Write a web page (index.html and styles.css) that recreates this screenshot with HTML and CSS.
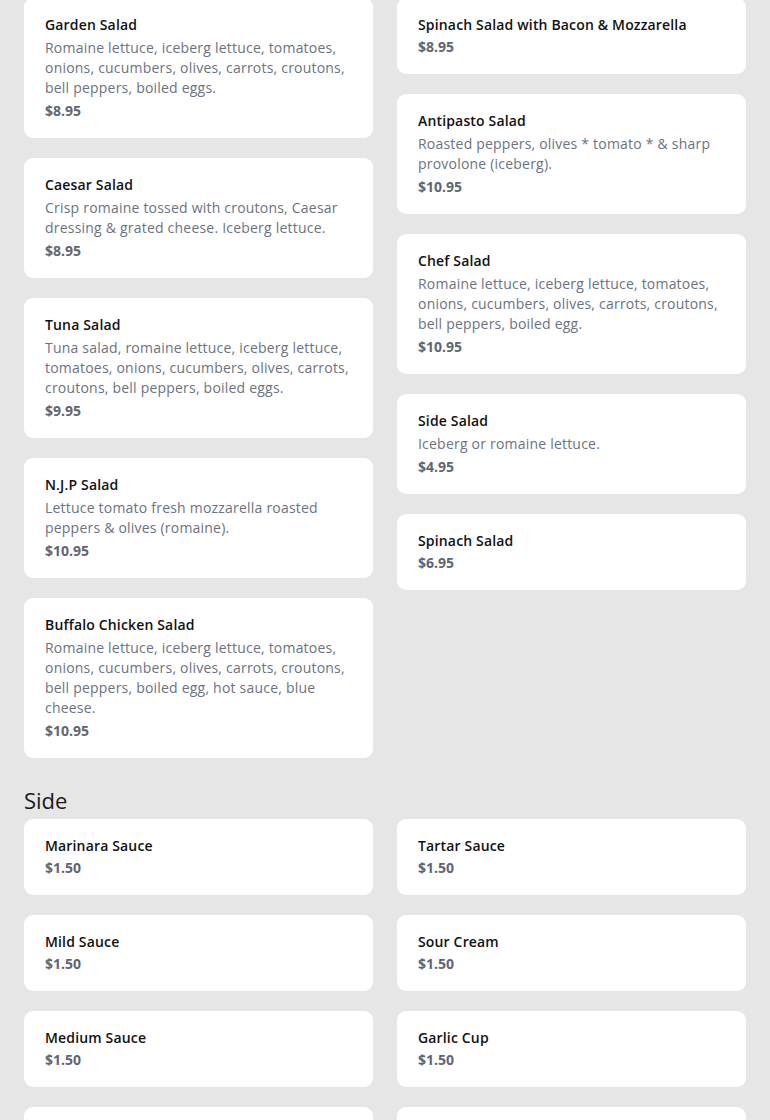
FILE: index.html
```html
<!DOCTYPE html>
<html lang="en">
<head>
<meta charset="utf-8">
<title>Menu</title>
<link rel="stylesheet" href="styles.css">
</head>
<body>
<main class="menu">
  <section class="section section-first">
    <div class="cols">
      <div class="col">
        <div class="card"><div class="name">Garden Salad</div><div class="desc">Romaine lettuce, iceberg lettuce, tomatoes, onions, cucumbers, olives, carrots, croutons, bell peppers, boiled eggs.</div><div class="price">$8.95</div></div>
        <div class="card"><div class="name">Caesar Salad</div><div class="desc">Crisp romaine tossed with croutons, Caesar dressing &amp; grated cheese. Iceberg lettuce.</div><div class="price">$8.95</div></div>
        <div class="card"><div class="name">Tuna Salad</div><div class="desc">Tuna salad, romaine lettuce, iceberg lettuce, tomatoes, onions, cucumbers, olives, carrots, croutons, bell peppers, boiled eggs.</div><div class="price">$9.95</div></div>
        <div class="card"><div class="name">N.J.P Salad</div><div class="desc">Lettuce tomato fresh mozzarella roasted peppers &amp; olives (romaine).</div><div class="price">$10.95</div></div>
        <div class="card"><div class="name">Buffalo Chicken Salad</div><div class="desc">Romaine lettuce, iceberg lettuce, tomatoes, onions, cucumbers, olives, carrots, croutons, bell peppers, boiled egg, hot sauce, blue cheese.</div><div class="price">$10.95</div></div>
      </div>
      <div class="col">
        <div class="card"><div class="name">Spinach Salad with Bacon &amp; Mozzarella</div><div class="price">$8.95</div></div>
        <div class="card"><div class="name">Antipasto Salad</div><div class="desc">Roasted peppers, olives * tomato * &amp; sharp provolone (iceberg).</div><div class="price">$10.95</div></div>
        <div class="card"><div class="name">Chef Salad</div><div class="desc">Romaine lettuce, iceberg lettuce, tomatoes, onions, cucumbers, olives, carrots, croutons, bell peppers, boiled egg.</div><div class="price">$10.95</div></div>
        <div class="card"><div class="name">Side Salad</div><div class="desc">Iceberg or romaine lettuce.</div><div class="price">$4.95</div></div>
        <div class="card"><div class="name">Spinach Salad</div><div class="price">$6.95</div></div>
      </div>
    </div>
  </section>
  <section class="section">
    <h2 class="heading">Side</h2>
    <div class="cols">
      <div class="col">
        <div class="card"><div class="name">Marinara Sauce</div><div class="price">$1.50</div></div>
        <div class="card"><div class="name">Mild Sauce</div><div class="price">$1.50</div></div>
        <div class="card"><div class="name">Medium Sauce</div><div class="price">$1.50</div></div>
        <div class="card"><div class="name">Hot Sauce</div><div class="price">$1.50</div></div>
      </div>
      <div class="col">
        <div class="card"><div class="name">Tartar Sauce</div><div class="price">$1.50</div></div>
        <div class="card"><div class="name">Sour Cream</div><div class="price">$1.50</div></div>
        <div class="card"><div class="name">Garlic Cup</div><div class="price">$1.50</div></div>
        <div class="card"><div class="name">Ranch</div><div class="price">$1.50</div></div>
      </div>
    </div>
  </section>
</main>
</body>
</html>
```
FILE: styles.css
```css
html, body {
  margin: 0;
  padding: 0;
}
body {
  background: #e6e6e6;
  font-family: "Open Sans", "Liberation Sans", sans-serif;
  color: #111;
  overflow: hidden;
}
.menu {
  padding: 0 24px;
  margin-top: -2px;
}
.section {
  margin-top: 29px;
}
.section-first {
  margin-top: 0;
}
.heading {
  margin: 0 0 6px;
  font-size: 22px;
  font-weight: 400;
  line-height: 26px;
  color: #1a1a1a;
}
.cols {
  display: flex;
  gap: 24px;
  align-items: flex-start;
}
.col {
  flex: 1 1 0;
  min-width: 0;
  display: flex;
  flex-direction: column;
  gap: 20px;
}
.card {
  background: #fff;
  border-radius: 9px;
  padding: 17px 21px 17px;
  display: flex;
  flex-direction: column;
  gap: 2px;
}
.name {
  font-size: 14px;
  font-weight: 600;
  line-height: 20px;
  letter-spacing: 0.16px;
  color: #111;
}
.desc {
  font-size: 14px;
  line-height: 20px;
  letter-spacing: 0.21px;
  padding: 1px 0;
  color: #6b7280;
}
.price {
  font-size: 14px;
  font-weight: 700;
  line-height: 20px;
  color: #5f6673;
}
```
